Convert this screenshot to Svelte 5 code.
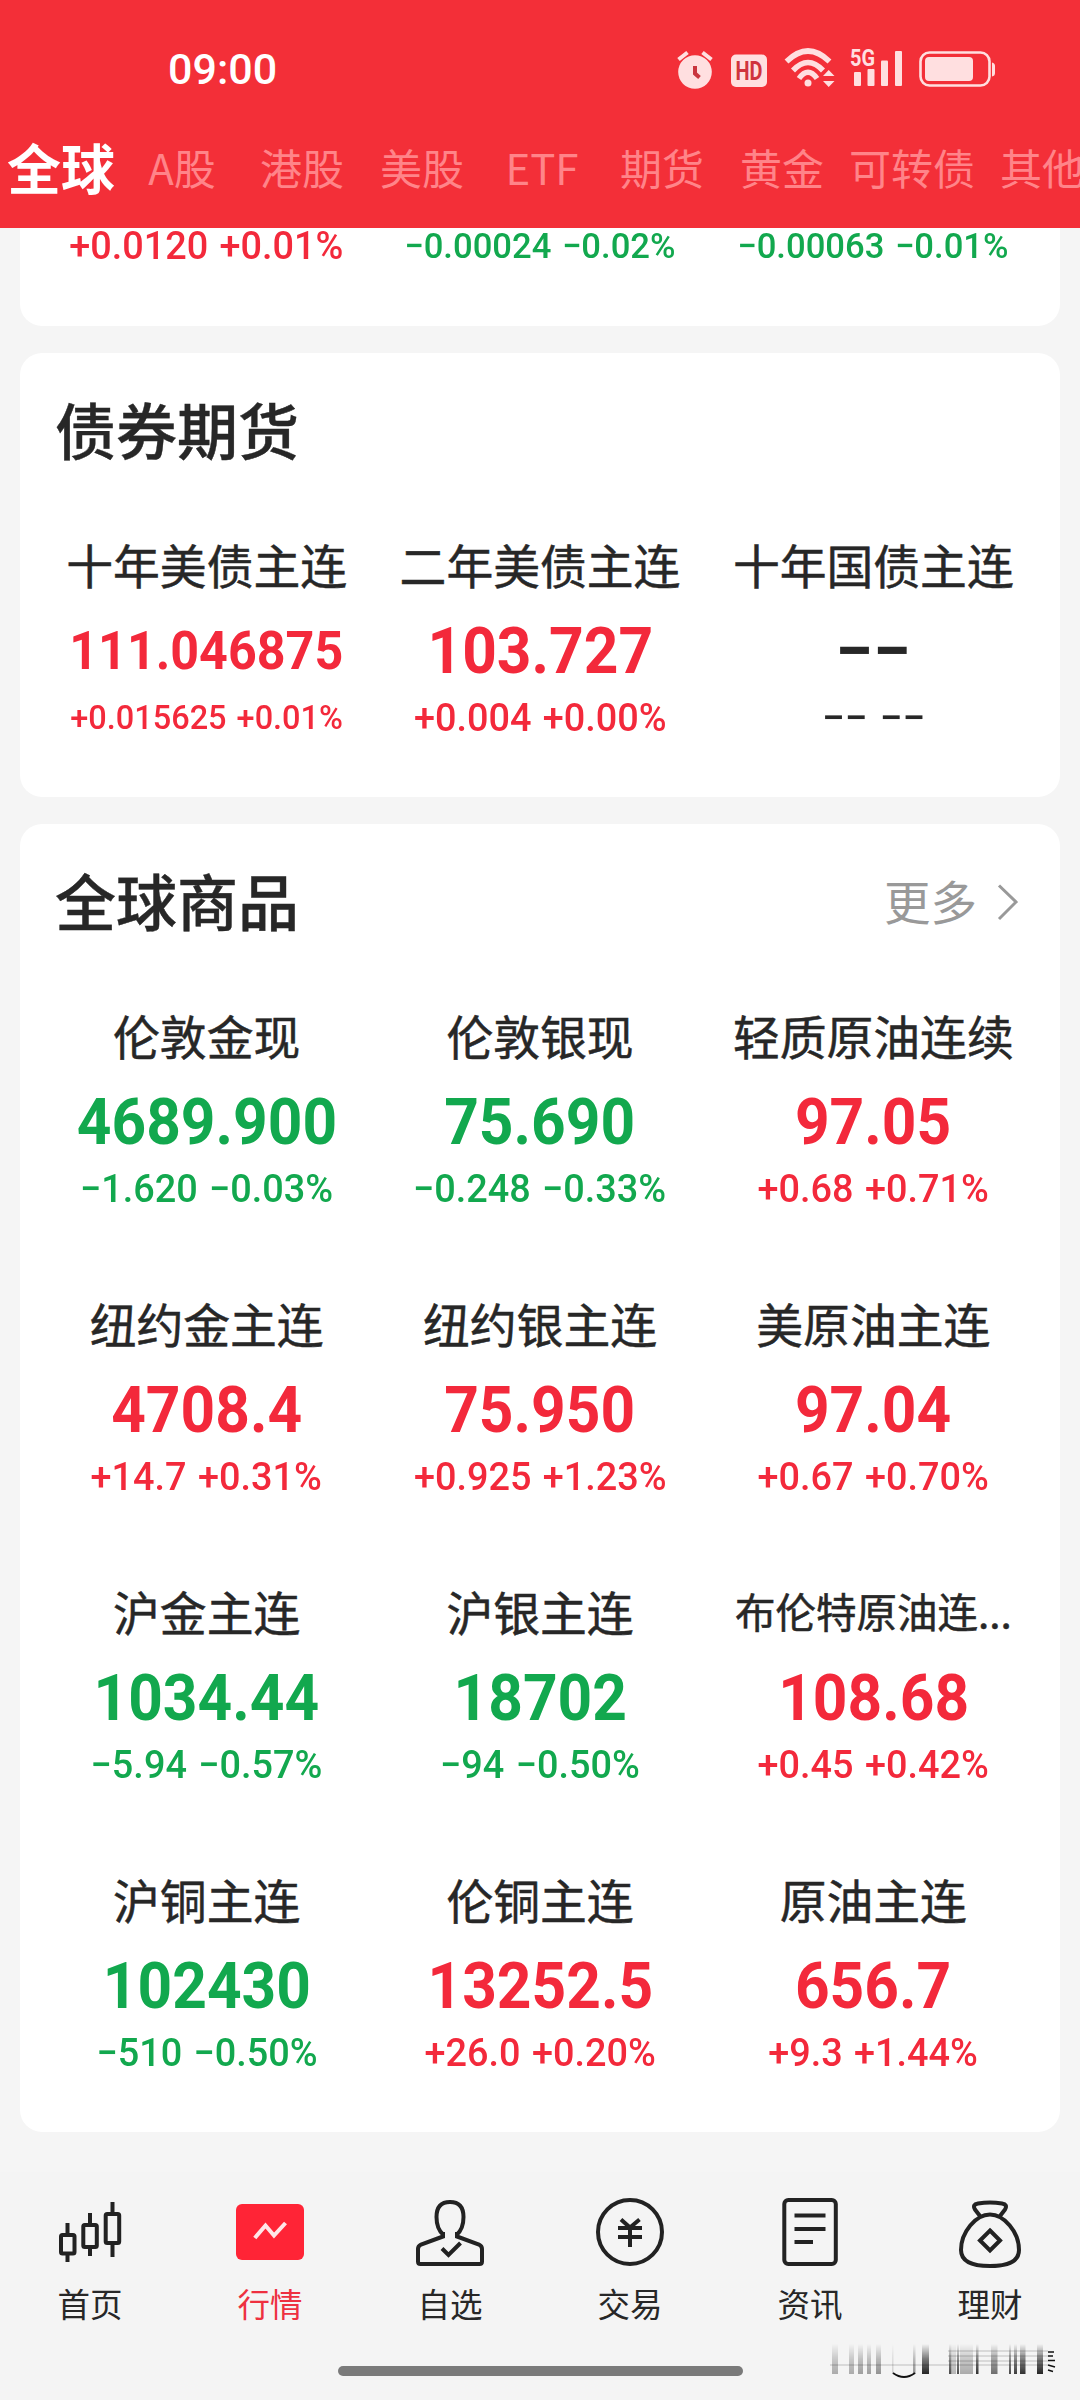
<script>
  const tabs = ['全球', 'A股', '港股', '美股', 'ETF', '期货', '黄金', '可转债', '其他'];
  let activeTab = 0;

  const forex = [
    { change: '+0.0120 +0.01%', trend: 'up' },
    { change: '−0.00024 −0.02%', trend: 'down', size: 'tight' },
    { change: '−0.00063 −0.01%', trend: 'down', size: 'tight' },
  ];

  const sections = [
    {
      title: '债券期货',
      more: false,
      quotes: [
        { name: '十年美债主连', price: '111.046875', change: '+0.015625 +0.01%', trend: 'up', size: 'small' },
        { name: '二年美债主连', price: '103.727', change: '+0.004 +0.00%', trend: 'up' },
        { name: '十年国债主连', price: '−−', change: '−− −−', trend: 'none' },
      ],
    },
    {
      title: '全球商品',
      more: true,
      quotes: [
        { name: '伦敦金现', price: '4689.900', change: '−1.620 −0.03%', trend: 'down' },
        { name: '伦敦银现', price: '75.690', change: '−0.248 −0.33%', trend: 'down' },
        { name: '轻质原油连续', price: '97.05', change: '+0.68 +0.71%', trend: 'up' },
        { name: '纽约金主连', price: '4708.4', change: '+14.7 +0.31%', trend: 'up' },
        { name: '纽约银主连', price: '75.950', change: '+0.925 +1.23%', trend: 'up' },
        { name: '美原油主连', price: '97.04', change: '+0.67 +0.70%', trend: 'up' },
        { name: '沪金主连', price: '1034.44', change: '−5.94 −0.57%', trend: 'down' },
        { name: '沪银主连', price: '18702', change: '−94 −0.50%', trend: 'down' },
        { name: '布伦特原油连...', price: '108.68', change: '+0.45 +0.42%', trend: 'up', long: true },
        { name: '沪铜主连', price: '102430', change: '−510 −0.50%', trend: 'down' },
        { name: '伦铜主连', price: '13252.5', change: '+26.0 +0.20%', trend: 'up' },
        { name: '原油主连', price: '656.7', change: '+9.3 +1.44%', trend: 'up' },
      ],
    },
  ];

  const navItems = [
    { id: 'home', label: '首页' },
    { id: 'market', label: '行情' },
    { id: 'watch', label: '自选' },
    { id: 'trade', label: '交易' },
    { id: 'news', label: '资讯' },
    { id: 'wealth', label: '理财' },
  ];
  let activeNav = 'market';

  // stamp strokes: x, width, opacity
  const stamp = [
    [4, 6, 0.3], [21, 5, 0.3], [30, 5, 0.35], [39, 4, 0.35], [48, 5, 0.4],
    [64, 1.5, 0.15], [85, 2.5, 0.4], [94, 7, 0.85], [121, 2.5, 0.7], [124, 4, 0.25],
    [129, 2, 0.7], [132, 13, 0.3], [148, 2.5, 0.8], [163, 6.5, 0.55], [181, 2, 0.7],
    [186, 3, 0.75], [192, 5.5, 0.8], [209, 6, 0.85],
  ];
</script>

<div class="screen">
  <header class="header">
    <div class="status-bar">
      <span class="time">09:00</span>
      <div class="status-icons">
        <svg width="42" height="48" viewBox="676 44 42 48">
          <path class="line" d="M678.5 59.5L687.5 52.5M702.5 52.5L711.5 59.5" stroke-width="4" />
          <circle cx="695" cy="72" r="16.8" />
          <path class="cut" d="M695 66V73.5L699.5 77.5" />
        </svg>
        <svg width="39" height="48" viewBox="731 44 39 48">
          <rect x="731" y="54.5" width="36" height="32.5" rx="5" />
          <text class="hd" x="749" y="79.5" text-anchor="middle" textLength="27" lengthAdjust="spacingAndGlyphs">HD</text>
        </svg>
        <svg width="53" height="48" viewBox="783 44 53 48">
          <path class="line" d="M786.5 61.5Q808 40.5 829.5 61.5" stroke-width="5.5" />
          <path class="line" d="M793 70.5Q808 54.5 823 70.5" stroke-width="5.5" />
          <path class="line" d="M799 78.5Q808 66 817 78.5" stroke-width="5.5" />
          <circle cx="808" cy="83" r="3.5" />
          <path d="M823 76L828.7 70L834.5 76ZM823 81L828.7 87L834.5 81Z" />
        </svg>
        <svg width="57" height="48" viewBox="849 44 57 48">
          <text class="gen" x="850" y="66" textLength="25" lengthAdjust="spacingAndGlyphs">5G</text>
          <rect x="854" y="72" width="7" height="14" rx="1" />
          <rect x="867.5" y="69" width="7" height="17" rx="1" />
          <rect x="881" y="60.5" width="7" height="25.5" rx="1" />
          <rect x="895" y="51" width="7" height="35" rx="1" />
        </svg>
        <svg width="77" height="48" viewBox="919 44 77 48">
          <rect class="line" x="920.5" y="52.5" width="69" height="33" rx="9" stroke-width="2.6" />
          <rect x="925" y="57" width="48" height="24" rx="4" />
          <path d="M992 62.5Q995 63 995 66V73Q995 76 992 76.5Z" />
        </svg>
      </div>
    </div>
    <nav class="tabs">
      {#each tabs as tab, i}
        <span class="tab" class:active={i === activeTab}>{tab}</span>
      {/each}
    </nav>
  </header>

  <main class="content">
    <section class="card card-cut">
      <div class="grid">
        {#each forex as item}
          <div class="change {item.trend} {item.size || ''}"><span>{item.change}</span></div>
        {/each}
      </div>
    </section>

    {#each sections as section}
      <section class="card">
        <div class="card-head">
          <h2>{section.title}</h2>
          {#if section.more}
            <span class="more">
              更多
              <svg width="22" height="38" viewBox="0 0 22 38">
                <path d="M2 2.5L19 19L2 36" />
              </svg>
            </span>
          {/if}
        </div>
        <div class="grid">
          {#each section.quotes as quote}
            <div class="quote">
              <div class="name" class:long={quote.long}>{quote.name}</div>
              <div class="price {quote.trend} {quote.size || ''}"><span>{quote.price}</span></div>
              <div class="change {quote.trend} {quote.size || ''}"><span>{quote.change}</span></div>
            </div>
          {/each}
        </div>
      </section>
    {/each}
  </main>

  <footer class="bottom">
    <nav class="nav">
      {#each navItems as item}
        <div class="nav-item" class:active={item.id === activeNav}>
          <svg width="72" height="76" viewBox="0 0 72 76">
            {#if item.id === 'home'}
              <path d="M13.5 27V38M13.5 58V66M36 17V28M36 52V60M58.5 6V17M58.5 48V61" />
              <rect x="7" y="39" width="13.5" height="18.5" rx="1.5" />
              <rect x="29.3" y="29" width="13.5" height="22" rx="1.5" />
              <rect x="51.7" y="18" width="13.5" height="29" rx="1.5" />
            {:else if item.id === 'market'}
              <rect class="solid" x="2" y="8" width="68" height="56" rx="6" />
              <path class="trend" d="M20.8 42L31.5 29.5L40 39.5L51.5 27" />
            {:else if item.id === 'watch'}
              <path d="M29 36V40.5L7 48.5Q4 50 4 53V65.5Q4 68 6.5 68H65.5Q68 68 68 65.5V53Q68 50 65 48.5L43 40.5V36" />
              <path d="M29.5 39Q22.5 33 22.5 21Q22.5 6 36 6Q49.5 6 49.5 21Q49.5 33 42.5 39" />
              <path d="M28 52.5L34.5 59L46.5 47" />
            {:else if item.id === 'trade'}
              <circle cx="36" cy="36" r="32" />
              <path d="M27 23.5L36 31.5L45.5 23.5M24 32H48M24 41H48M36 31V51" />
            {:else if item.id === 'news'}
              <rect x="10.3" y="4" width="51.5" height="64" rx="4" />
              <path d="M20.5 19.6H51.5M20.5 33H51.5M20.5 46H39" />
            {:else}
              <path d="M36 18.5C22 18.5 7 36 7 54C7 66 18 70 36 70S65 66 65 54C65 36 50 18.5 36 18.5Z" />
              <path d="M26 20L21 13.5Q18 8.5 24 7.5Q36 5.5 48 7.5Q54 8.5 51 13.5L46 20" />
              <path d="M36 34.5L46 44.5L36 54.5L26 44.5Z" />
            {/if}
          </svg>
          <span>{item.label}</span>
        </div>
      {/each}
    </nav>
    <div class="home-indicator"></div>
    <svg class="stamp" width="230" height="40" viewBox="0 0 230 40">
      <defs>
        <linearGradient id="fade" x1="0" y1="0" x2="0" y2="1">
          <stop offset="0" stop-color="#000" stop-opacity="0" />
          <stop offset="0.5" stop-color="#000" stop-opacity="0.6" />
          <stop offset="1" stop-color="#000" />
        </linearGradient>
      </defs>
      <g class="strokes">
        {#each stamp as [x, width, opacity]}
          <rect {x} y="2" {width} height="30" fill="url(#fade)" {opacity} />
        {/each}
      </g>
      <path d="M2 23H220M120 9H220M120 14H220M120 19H220" stroke="#000" stroke-opacity="0.15" stroke-width="1.5" />
      <path d="M65 31Q76 39 87 31" fill="none" stroke="#111" stroke-width="1.8" />
      <path d="M220 10H226M220 14H225M220 18.5H227M220 23L227 25M220 28L225 29.5" stroke="#111" stroke-width="1.5" />
    </svg>
  </footer>
</div>

<style>
  :global(body) {
    margin: 0;
    background: #f5f5f5;
  }

  .screen {
    display: flex;
    flex-direction: column;
    width: 1080px;
    height: 2400px;
    overflow: hidden;
    background: #f5f5f5;
    color: #272727;
    font-family: 'Noto Sans CJK SC', sans-serif;
  }

  .header {
    flex: none;
    height: 228px;
    background: #f32f38;
    color: #fff;
  }

  .status-bar {
    display: flex;
    justify-content: space-between;
    align-items: center;
    height: 48px;
    padding: 44px 84px 0 168px;
  }

  .time {
    padding-top: 2px;
    font: 500 43px/48px Roboto, sans-serif;
  }

  .status-icons {
    display: flex;
    gap: 13px;
    fill: #ffdfe0;
  }

  .status-icons .line {
    fill: none;
    stroke: #ffdfe0;
  }

  .status-icons .cut {
    fill: none;
    stroke: #c9363f;
    stroke-width: 4;
  }

  .hd {
    fill: #d0343d;
    font: 700 25px Roboto, sans-serif;
  }

  .gen {
    font: 700 24px Roboto, sans-serif;
  }

  .tabs {
    display: flex;
    align-items: center;
    height: 80px;
    margin-top: 35px;
    overflow: hidden;
  }

  .tab {
    flex: none;
    box-sizing: border-box;
    min-width: 120px;
    padding: 0 7px;
    color: #ff8489;
    font-size: 42px;
    line-height: 80px;
    text-align: center;
    white-space: nowrap;
  }

  .tab.active {
    color: #fff;
    font-size: 54px;
    font-weight: 700;
  }

  .content {
    flex: none;
    display: flex;
    flex-direction: column;
    gap: 27px;
    height: 1944px;
  }

  .card {
    margin: 0 20px;
    padding: 0 20px;
    border-radius: 22px;
    background: #fff;
  }

  .card-cut {
    padding-bottom: 61px;
    border-radius: 0 0 22px 22px;
  }

  .card-head {
    display: flex;
    justify-content: space-between;
    align-items: center;
    height: 156px;
    padding: 0 21px 0 15px;
  }

  h2 {
    margin: 0;
    padding-bottom: 4px;
    font-size: 61px;
    font-weight: 500;
    line-height: 152px;
    -webkit-text-stroke: 0.4px currentColor;
  }

  .more {
    display: flex;
    align-items: center;
    gap: 20px;
    padding-bottom: 5px;
    color: #999;
    font-size: 46.5px;
    line-height: 66px;
  }

  .more svg {
    margin-top: 4px;
    fill: none;
    stroke: #999;
    stroke-width: 3;
  }

  .grid {
    display: grid;
    grid-template-columns: repeat(3, 1fr);
    text-align: center;
    white-space: nowrap;
  }

  .quote {
    height: 288px;
  }

  .name {
    padding-top: 25px;
    font-size: 46.8px;
    line-height: 60px;
    -webkit-text-stroke: 0.5px currentColor;
  }

  .name.long {
    font-size: 40.5px;
  }

  .price {
    margin-top: 17px;
    font: 700 65px/80px Roboto, sans-serif;
  }

  .price.small {
    font-size: 54px;
  }

  .change {
    margin-top: 7px;
    font: 500 39px/40px Roboto, sans-serif;
    word-spacing: 2px;
  }

  .change.small {
    font-size: 33.5px;
  }

  .change.tight {
    font-size: 35.7px;
  }

  /* condensed figures */
  .price span {
    display: inline-block;
    transform: scaleX(0.93);
  }

  .change span {
    display: inline-block;
    transform: scaleX(0.97);
  }

  .price.none span {
    transform: scaleX(1.05);
  }

  .change.none span {
    transform: scaleX(1.04);
  }

  .card-cut .change {
    height: 37px;
    margin-top: 0;
    line-height: 37px;
  }

  .up {
    color: #f3293b;
  }

  .down {
    color: #12a84e;
  }

  .bottom {
    position: relative;
    flex: none;
    height: 228px;
    background: #f4f4f4;
  }

  .nav {
    display: flex;
    height: 194px;
  }

  .nav-item {
    display: flex;
    flex: 1;
    flex-direction: column;
    align-items: center;
    padding-top: 24px;
    font-size: 32.5px;
    line-height: 48px;
  }

  .nav-item svg {
    margin-bottom: 7px;
    fill: none;
    stroke: #222;
    stroke-width: 4;
  }

  .nav-item.active {
    color: #ee3040;
  }

  .nav-item .solid {
    fill: #ff2436;
    stroke: none;
  }

  .nav-item .trend {
    stroke: #ffe6e8;
  }

  .home-indicator {
    width: 405px;
    height: 10px;
    margin: 0 auto;
    border-radius: 5px;
    background: #7a7a7a;
  }

  .stamp {
    position: absolute;
    right: 22px;
    bottom: 18px;
  }

  .strokes {
    filter: blur(0.6px);
  }
</style>
